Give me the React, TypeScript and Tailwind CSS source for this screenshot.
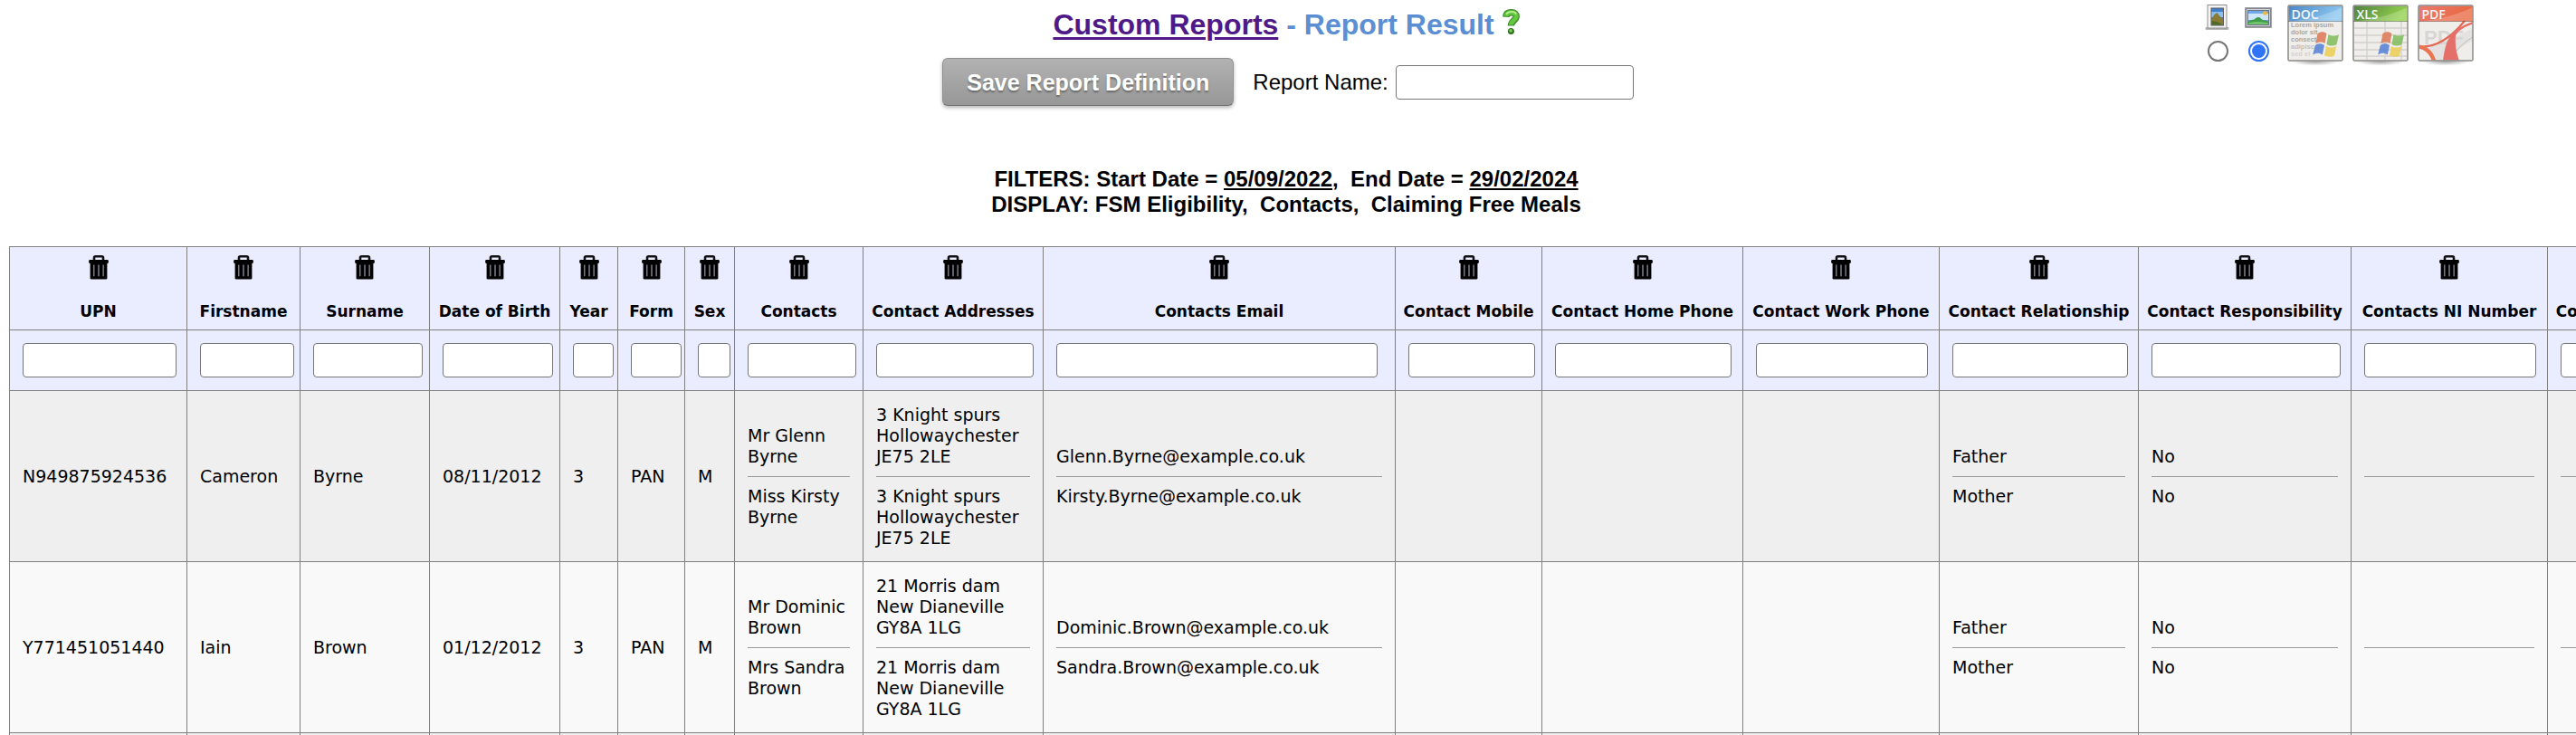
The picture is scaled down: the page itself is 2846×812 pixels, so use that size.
import React from "react";

type Column = { name: string; col: string; input: string };

const columns: Column[] = [
  { name: "UPN", col: "min-w-[196px]", input: "w-[170px]" },
  { name: "Firstname", col: "min-w-[125px]", input: "w-[104px]" },
  { name: "Surname", col: "min-w-[143px]", input: "w-[121px]" },
  { name: "Date of Birth", col: "min-w-[144px]", input: "w-[122px]" },
  { name: "Year", col: "min-w-[64px]", input: "w-[45px]" },
  { name: "Form", col: "min-w-[74px]", input: "w-[56px]" },
  { name: "Sex", col: "min-w-[55px]", input: "w-[36px]" },
  { name: "Contacts", col: "min-w-[142px]", input: "w-[120px]" },
  { name: "Contact Addresses", col: "min-w-[199px]", input: "w-[174px]" },
  { name: "Contacts Email", col: "min-w-[389px]", input: "w-[355px]" },
  { name: "Contact Mobile", col: "min-w-[162px]", input: "w-[140px]" },
  { name: "Contact Home Phone", col: "min-w-[222px]", input: "w-[195px]" },
  { name: "Contact Work Phone", col: "min-w-[217px]", input: "w-[190px]" },
  { name: "Contact Relationship", col: "min-w-[220px]", input: "w-[194px]" },
  { name: "Contact Responsibility", col: "min-w-[235px]", input: "w-[209px]" },
  { name: "Contacts NI Number", col: "min-w-[217px]", input: "w-[190px]" },
  { name: "Contacts DOB", col: "min-w-[150px]", input: "w-[120px]" },
];

type Cell = string | [string[], string[]];

const BLANK: Cell = [[""], [""]];

const rows: Cell[][] = [
  [
    "N949875924536",
    "Cameron",
    "Byrne",
    "08/11/2012",
    "3",
    "PAN",
    "M",
    [["Mr Glenn", "Byrne"], ["Miss Kirsty", "Byrne"]],
    [
      ["3 Knight spurs", "Hollowaychester", "JE75 2LE"],
      ["3 Knight spurs", "Hollowaychester", "JE75 2LE"],
    ],
    [["Glenn.Byrne@example.co.uk"], ["Kirsty.Byrne@example.co.uk"]],
    "",
    "",
    "",
    [["Father"], ["Mother"]],
    [["No"], ["No"]],
    BLANK,
    BLANK,
  ],
  [
    "Y771451051440",
    "Iain",
    "Brown",
    "01/12/2012",
    "3",
    "PAN",
    "M",
    [["Mr Dominic", "Brown"], ["Mrs Sandra", "Brown"]],
    [
      ["21 Morris dam", "New Dianeville", "GY8A 1LG"],
      ["21 Morris dam", "New Dianeville", "GY8A 1LG"],
    ],
    [["Dominic.Brown@example.co.uk"], ["Sandra.Brown@example.co.uk"]],
    "",
    "",
    "",
    [["Father"], ["Mother"]],
    [["No"], ["No"]],
    BLANK,
    BLANK,
  ],
];

function Trash() {
  return (
    <svg viewBox="0 0 22 27" className="h-[27px] w-[22px]" aria-hidden="true">
      <path d="M6 5.5V2.800Q6 1.300 7.500 1.300h7Q16 1.300 16 2.800v2.700" fill="none" stroke="#111" strokeWidth="2.600" />
      <rect x="0.2" y="5" width="21.600" height="4" rx="1.200" fill="#000" />
      <path d="M1.600 8h18.800v17.200q0 1.400-1.400 1.400H3q-1.400 0-1.400-1.400z" fill="#000" />
      <rect x="5" y="10.500" width="1.500" height="12.800" fill="#777883" />
      <rect x="10.200" y="10.500" width="1.600" height="12.800" fill="#777883" />
      <rect x="15.400" y="10.500" width="1.500" height="12.800" fill="#777883" />
    </svg>
  );
}

function HelpMark() {
  return (
    <svg viewBox="0 0 19 28" className="h-7 w-[19px]" aria-hidden="true">
      <path d="M3.800 8.800C4 5.200 6.500 3.800 9.800 3.800c3.400 0 5.400 1.600 5.400 4.400 0 4.200-5.800 4.400-5.800 10.400" fill="none" stroke="#3d8a2b" strokeWidth="7.400" />
      <path d="M3.800 7.800C4.400 5 6.500 3.800 9.800 3.800c3.400 0 5.400 1.600 5.400 4.400 0 4.200-5.800 4.400-5.800 9.400" fill="none" stroke="#62c842" strokeWidth="5" />
      <path d="M4.200 5.600C5.800 3.400 8 2.800 10 2.800c2.600 0 4.400 1 5 2.800" fill="none" stroke="#b9f08c" strokeWidth="1.800" />
      <circle cx="9.400" cy="24.400" r="3.500" fill="#2f701f" />
      <circle cx="9.100" cy="23.900" r="1.800" fill="#7dcb5a" />
    </svg>
  );
}

function PortraitIcon() {
  return (
    <svg viewBox="0 0 28 28" className="size-7" aria-hidden="true">
      <rect x="0.5" y="25" width="26" height="3" rx="1" fill="#b4b4b4" />
      <rect x="3" y="0.5" width="21" height="25.5" fill="#f4f4f4" stroke="#8e8e8e" />
      <rect x="7" y="4" width="13.5" height="19" fill="#3f7fd0" stroke="#5b5b5b" />
      <rect x="7.5" y="8" width="12.5" height="6" fill="#8cc0ec" />
      <path d="M7.5 16l3-5 3-2 3 4 3.5 3v6.5H7.5z" fill="#8a7b35" />
      <path d="M7.5 18l6 1 6.5 3.5H7.5z" fill="#4d6a26" />
    </svg>
  );
}

function LandscapeIcon() {
  return (
    <svg viewBox="0 0 30 28" className="h-7 w-[30px]" aria-hidden="true">
      <rect x="1.2" y="4.2" width="27.6" height="20.6" fill="#dfe3e8" stroke="#85888f" strokeWidth="2" />
      <rect x="3.5" y="6.5" width="23" height="16" fill="#6ea9e6" stroke="#6b7480" />
      <rect x="4" y="10" width="22" height="7" fill="#cfe6fa" />
      <path d="M4 19c3-3 5-1.500 7-3s4-3.500 7-.5 5 1 8 3.500V22H4z" fill="#3f9d4a" />
      <path d="M4 20.500c6-2 14-2 22 0V22H4z" fill="#71c46c" />
      <circle cx="22.500" cy="9.500" r="2.300" fill="#f7b733" />
    </svg>
  );
}

function Flag() {
  return (
    <g opacity="0.9">
      <path d="M33.500 32c3.500-2.500 7-2.300 10 0l-2 11c-3-2-6.500-2-10.200.2z" fill="#dd7f5c" />
      <path d="M45.500 33c4 2.200 7.500 2 11.500.2l-2.500 11c-3.500 1.800-7.500 1.800-11-.2z" fill="#86bf62" />
      <path d="M30.800 45c3.500-2.300 7-2.300 10.200 0l-2.200 10.500c-3-2.200-6.800-2.200-10.600 0z" fill="#5b86d6" />
      <path d="M43 46c3.500 2.200 7.500 2 11.200.2L52 56.500c-3.500 1.700-7.500 1.700-11-.5z" fill="#eccf5a" />
    </g>
  );
}

function FileIcon({ kind, from, to }: { kind: "DOC" | "XLS" | "PDF"; from: string; to: string }) {
  const grad = "bar-" + kind;
  return (
    <svg viewBox="0 0 62 68" className="h-[68px] w-[62px]" aria-hidden="true">
      <defs>
        <linearGradient id={grad} x1="0" y1="0" x2="1" y2="0.3">
          <stop offset="0" stopColor={from} />
          <stop offset="1" stopColor={to} />
        </linearGradient>
        <radialGradient id={grad + "-shadow"}>
          <stop offset="0" stopColor="#000" stopOpacity="0.35" />
          <stop offset="1" stopColor="#000" stopOpacity="0" />
        </radialGradient>
        <clipPath id={grad + "-clip"}>
          <rect x="1.500" y="1.500" width="59" height="60" />
        </clipPath>
      </defs>
      <ellipse cx="31" cy="63" rx="27" ry="4.500" fill={`url(#${grad}-shadow)`} />
      <rect x="1" y="1" width="60" height="61" rx="1.500" fill="#f0eeeb" />
      <g clipPath={`url(#${grad}-clip)`}>
        {kind === "DOC" && (
          <g className="font-['Liberation_Sans'] font-bold" fontSize="7.500" fill="#a9a6a3">
            <text x="4" y="25">Lorem ipsum</text>
            <text x="4" y="33">dolor sit</text>
            <text x="4" y="41">consect</text>
            <text x="4" y="49" fill="#c2bfbc">adipisc</text>
            <text x="4" y="57" fill="#d5d2cf">sed ei</text>
          </g>
        )}
        {kind === "XLS" && (
          <path d="M1 26h60M1 34h60M1 42h60M1 50h60M1 57h60M16 18v44M36 18v44M54 18v44" stroke="#d3d0cc" strokeWidth="1.300" fill="none" />
        )}
        {kind === "PDF" && (
          <g>
            <path d="M1 48C24 46 42 36 61 26v14C48 46 40 54 34 62h-8z" fill="#dcdad8" opacity="0.6" />
            <text x="7" y="44" fontSize="22" className="font-['Liberation_Sans'] font-bold" fill="#d8d6d5">PDF</text>
            <path d="M36 62c5-10 12-18 25-26" fill="none" stroke="#bdbbba" strokeWidth="1" />
            <path d="M1 46.500C20 48 36 38 52 18" fill="none" stroke="#e26a55" strokeWidth="2.200" />
            <path d="M28 62c2-14 4-22 9-28 6-7 12-11 24-15v2.500c-9 3-16 7-19 13-1 10 1 19 4 27.500z" fill="#e5706a" />
            <path d="M1 44.500c10 1 16 7 19.500 17.500H16C12.500 54 8 50 1 48.500z" fill="#ea7550" />
          </g>
        )}
        <rect x="1" y="1" width="60" height="17.500" fill={`url(#${grad})`} />
        <path d="M1 18.500C24 17 44 11 61 3v15.500z" fill="#fff" opacity="0.22" />
        <text x="4.500" y="15.500" fontSize="14" className="font-['Open_Sans'] font-semibold" fill="#f3f7fa">
          {kind}
        </text>
      </g>
      {kind !== "PDF" && <Flag />}
      <rect x="1" y="1" width="60" height="61" rx="1.500" fill="none" stroke="#8a8a88" strokeWidth="1.500" />
      <path d="M1 18.500h60" stroke="#000" strokeOpacity="0.3" />
    </svg>
  );
}

function OrientationOption({ label, checked, children }: { label: string; checked?: boolean; children: React.ReactNode }) {
  return (
    <label className="flex w-[30px] flex-col items-center gap-3">
      {children}
      <input
        type="radio"
        name="orientation"
        aria-label={label}
        defaultChecked={checked}
        className="size-[23px] appearance-none rounded-full border-2 border-[#767676] bg-white bg-clip-content p-[2px] checked:border-[#2f73f6] checked:bg-[#2f73f6]"
      />
    </label>
  );
}

function CellContent({ value }: { value: Cell }) {
  if (typeof value === "string") return <>{value}</>;
  return (
    <>
      {value.map((lines, i) => (
        <React.Fragment key={i}>
          {i > 0 && <hr className="my-[10px] border-t border-[#9a9a9a]" />}
          {lines.map((line, j) => (
            <div key={j} className="h-[23px]">
              {line}
            </div>
          ))}
        </React.Fragment>
      ))}
    </>
  );
}

export default function App() {
  return (
    <div className="h-screen overflow-hidden bg-white font-['Liberation_Sans',Arial,sans-serif] text-black">
      <header className="grid grid-cols-[1fr_auto_1fr] pr-1 pb-8">
        <div />
        <div className="flex flex-col items-center pt-[9px]">
          <h1 className="flex items-baseline gap-[9px] text-[32px] leading-9 font-bold text-[#5b8ed2]">
            <span>
              <a href="#reports" className="text-[#4f1a88] underline decoration-[3px] underline-offset-[3px]">
                Custom Reports
              </a>{" "}
              - Report Result
            </span>
            <a href="#help" aria-label="Help">
              <HelpMark />
            </a>
          </h1>
          <form className="mt-[19px] flex items-center gap-[21px] pl-1" onSubmit={(e) => e.preventDefault()}>
            <button
              type="submit"
              className="h-[53px] rounded-md border border-[#8f8f8f] border-b-[#6f6f6f] bg-linear-to-b from-[#b2b2b2] to-[#979797] px-[26px] text-[25px] leading-7 font-bold text-white shadow-[0_2px_4px_rgba(0,0,0,0.3)] text-shadow-[0_2px_2px_rgba(0,0,0,0.35)]"
            >
              Save Report Definition
            </button>
            <span className="flex items-center gap-[8px]">
              <label htmlFor="report-name" className="text-2xl leading-7">
                Report Name:
              </label>
              <input id="report-name" type="text" className="h-[38px] w-[263px] rounded-[4px] border border-[#767676] bg-white px-2 text-xl" />
            </span>
          </form>
          <div className="mt-[67px] text-center text-2xl leading-7 font-bold">
            <p>
              FILTERS: Start Date = <span className="underline decoration-2 underline-offset-2">05/09/2022</span>,&nbsp; End Date ={" "}
              <span className="underline decoration-2 underline-offset-2">29/02/2024</span>
            </p>
            <p>DISPLAY: FSM Eligibility,&nbsp; Contacts,&nbsp; Claiming Free Meals</p>
          </div>
        </div>
        <div className="flex items-start justify-end gap-[17px] pt-[5px] pr-[109px]">
          <fieldset className="flex gap-[15px]">
            <OrientationOption label="Portrait">
              <PortraitIcon />
            </OrientationOption>
            <OrientationOption label="Landscape" checked>
              <LandscapeIcon />
            </OrientationOption>
          </fieldset>
          <div className="flex gap-[10px]">
            <a href="#doc" aria-label="Export as DOC">
              <FileIcon kind="DOC" from="#4a84c4" to="#8cc8f0" />
            </a>
            <a href="#xls" aria-label="Export as XLS">
              <FileIcon kind="XLS" from="#4f7f42" to="#93d14c" />
            </a>
            <a href="#pdf" aria-label="Export as PDF">
              <FileIcon kind="PDF" from="#ec7a72" to="#e8683f" />
            </a>
          </div>
        </div>
      </header>

      <div className="pl-[10px]">
        <table className="w-max border-collapse font-['DejaVu_Sans',Verdana,sans-serif] text-[19px] leading-[23px]">
          <thead className="bg-[#e9edff]">
            <tr>
              {columns.map((c) => (
                <th key={c.name} scope="col" className={`${c.col} border border-[#808080] pt-[9px] pb-[8px] text-[17px] leading-[23px] font-bold whitespace-nowrap`}>
                  <div className="flex flex-col items-center gap-[24px]">
                    <button type="button" aria-label={`Remove ${c.name}`}>
                      <Trash />
                    </button>
                    <span>{c.name}</span>
                  </div>
                </th>
              ))}
            </tr>
            <tr>
              {columns.map((c) => (
                <td key={c.name} className="h-[67px] border border-[#808080] pl-[14px] align-middle">
                  <input
                    type="text"
                    aria-label={`Filter ${c.name}`}
                    className={`${c.input} block h-[38px] rounded-[4px] border border-[#767676] bg-white px-1 text-base`}
                  />
                </td>
              ))}
            </tr>
          </thead>
          <tbody>
            {rows.map((row, r) => (
              <tr key={r} className="odd:bg-[#efefef] even:bg-[#f9f9f9]">
                {row.map((value, i) => (
                  <td key={i} className="h-[189px] border border-[#808080] px-[14px] py-[14px] align-middle whitespace-nowrap">
                    <CellContent value={value} />
                  </td>
                ))}
              </tr>
            ))}
            <tr className="bg-[#efefef]">
              {columns.map((c) => (
                <td key={c.name} className="h-4 border border-[#808080]" />
              ))}
            </tr>
          </tbody>
        </table>
      </div>
    </div>
  );
}
